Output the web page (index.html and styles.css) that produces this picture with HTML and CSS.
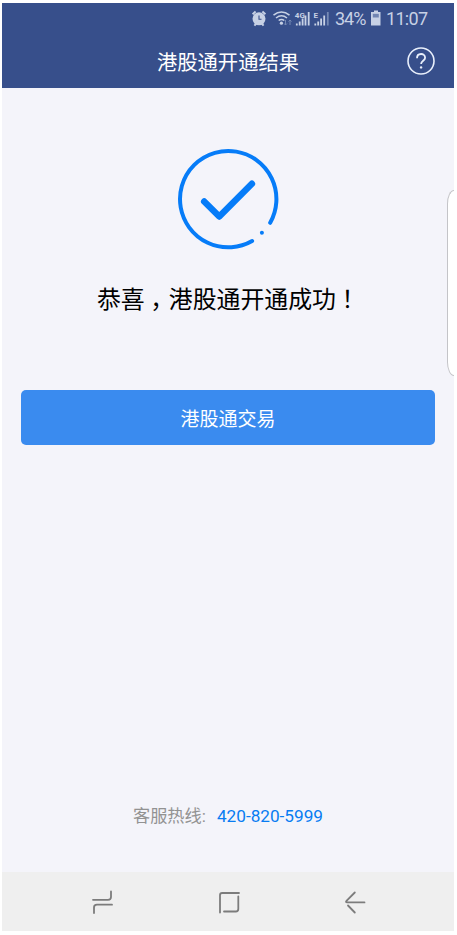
FILE: index.html
```html
<!DOCTYPE html>
<html lang="zh-CN">
<head>
<meta charset="utf-8">
<title>港股通开通结果</title>
<link rel="stylesheet" href="styles.css">
</head>
<body>
<div class="phone">
  <header class="header">
    <div class="status">
      <svg class="status-icons" width="80" height="20" viewBox="250 9 80 20" fill="none" stroke="#c7d1e5">
        <circle cx="259" cy="18.8" r="6.5" fill="#c7d1e5" stroke="none"/>
        <path d="M252.6 14.2l3-2.6M265.4 14.2l-3-2.6M254.4 25.6l1.6-1.8M263.6 25.6l-1.6-1.8" stroke-width="2"/>
        <path d="M259 15.5v3.7h2.5" stroke="#374f8b" stroke-width="1.1"/>
        <path d="M273.5 15.2q8-6.5 16 0M276 18q5.5-4.4 11 0M278.7 20.5q2.8-2.2 5.6 0" stroke-width="1.5"/>
        <circle cx="281.4" cy="23.2" r="1.6" fill="#c7d1e5" stroke="none"/>
        <path d="M285.5 20v5M284 23.5l1.5 1.5 1.5-1.5M290 25v-5M288.5 21.5l1.5-1.5 1.5 1.5" stroke="#7589b4"/>
        <path d="M296.8 25.5v-2M299.7 25.5v-4M302.6 25.5v-7M305.5 25.5v-10M308.7 25.5v-13.5" stroke-width="1.8"/>
        <path d="M315.3 25.5v-2M318.2 25.5v-4M321.1 25.5v-7M324.2 25.5v-10" stroke-width="1.8"/>
        <path d="M327.8 25.5v-13.5" stroke="#7589b4" stroke-width="1.8"/>
        <text class="net" x="294.8" y="17.5">4G</text>
        <text class="net" x="313.5" y="17.5">E</text>
      </svg>
      <span class="percent">34%</span>
      <svg class="battery" width="10" height="16" viewBox="0 0 10 16">
        <path d="M3 .5h4v1.5h2.5v13.5h-9.5v-13.5h3z" fill="#c7d1e5"/>
        <path d="M1.8 3.8h6v3.7h-6z" fill="#7185b2"/>
      </svg>
      <span class="clock">11:07</span>
    </div>
    <div class="titlebar">
      <h1 class="title">港股通开通结果</h1>
      <svg class="help" width="30" height="30" viewBox="0 0 30 30" fill="none" stroke="#e8effb" stroke-width="1.6">
        <circle cx="15" cy="15" r="13"/>
        <path d="M11 12.2c0-5.5 8.1-5.5 8.1-.5 0 3-4 3.1-4 6.3" stroke-width="1.8"/>
        <circle cx="15.1" cy="21.4" r="1.2" fill="#e8effb" stroke="none"/>
      </svg>
    </div>
  </header>
  <main class="main">
    <svg class="success" width="104" height="104" viewBox="0 0 104 104" fill="none" stroke="#067cf8" stroke-linecap="round" stroke-linejoin="round">
      <path d="M76.1 93A48.2 48.2 0 1 1 94.2 74.8" stroke-width="4"/>
      <path d="M28.2 53.5L43.3 68.5L75.9 35.7" stroke-width="6.5"/>
      <circle cx="85.9" cy="84.7" r="2" fill="#067cf8" stroke="none"/>
    </svg>
    <p class="message">恭喜<span class="mark">，</span>港股通开通成功<span class="mark">！</span></p>
    <button class="trade">港股通交易</button>
    <p class="hotline">客服热线:<span class="number">420-820-5999</span></p>
    <div class="edge"></div>
  </main>
  <nav class="nav">
    <svg width="24" height="26" viewBox="0 0 24 26">
      <path d="M2 10.8H17Q20 10.8 20 8V2.5M21 15.7H6Q3 15.7 3 18.5V24"/>
    </svg>
    <svg width="24" height="26" viewBox="0 0 24 26">
      <path d="M3 23.5V6.2Q3 4 5.2 4H22M21.3 7.5V20Q21.3 22.5 18.8 22.5H7"/>
    </svg>
    <svg width="24" height="26" viewBox="0 0 24 26">
      <path d="M21.5 13.4H4.2Q2.2 13.4 3.5 11.8L11.8 3.5M5 16.5L11.8 23.5"/>
    </svg>
  </nav>
</div>
</body>
</html>
```
FILE: styles.css
```css
* {
  box-sizing: border-box;
}

body {
  margin: 0;
  padding: 3px 3px 4px 2px;
  height: 935px;
  background: #fff;
  font-family: Roboto, "Noto Sans CJK SC", sans-serif;
  overflow: hidden;
}

h1,
p {
  margin: 0;
  font-weight: 400;
}

.phone {
  display: flex;
  flex-direction: column;
  height: 928px;
  background: #f4f4fa;
}

.header {
  height: 85px;
  background: #374f8b;
  color: #fff;
}

.status {
  display: flex;
  align-items: center;
  height: 32px;
  padding-left: 248px;
  color: #c7d1e5;
  font-size: 18px;
  line-height: 20px;
}

.status-icons {
  flex: none;
}

.net {
  font: 700 8px Roboto, sans-serif;
  fill: #c7d1e5;
  stroke: none;
}

.percent {
  width: 35px;
  padding-left: 5px;
  letter-spacing: -1px;
  white-space: nowrap;
}

.battery {
  margin: 0 5px 2px 6px;
}

.clock {
  letter-spacing: -0.7px;
}

.titlebar {
  display: grid;
  grid-template-columns: 52px 1fr 52px;
  align-items: center;
  height: 52px;
}

.title {
  grid-column: 2;
  padding-top: 3px;
  font-size: 20.3px;
  line-height: 30px;
  text-align: center;
}

.help {
  margin-left: 4px;
}

.main {
  position: relative;
  display: flex;
  flex: 1;
  flex-direction: column;
  align-items: center;
  padding: 59px 19px 42px;
}

.success {
  flex: none;
  margin-top: 1px;
}

.message {
  margin-top: 30px;
  padding-left: 1px;
  color: #000;
  font-size: 23.9px;
  line-height: 36px;
  white-space: nowrap;
}

.mark {
  display: inline-block;
  width: 24px;
  padding-right: 1px;
  font-feature-settings: "halt";
  text-align: center;
}

.trade {
  width: 414px;
  height: 55px;
  margin-top: 72px;
  padding: 0;
  border: 0;
  border-radius: 5px;
  background: #3a8bef;
  color: #fff;
  font: inherit;
  font-size: 19px;
}

.hotline {
  margin-top: auto;
  color: #929292;
  font-size: 17.2px;
  line-height: 28px;
}

.number {
  margin-left: 11px;
  color: #087cf2;
}

.edge {
  position: absolute;
  top: 102px;
  right: 0;
  width: 7px;
  height: 186px;
  border: 1px solid #c4c4c8;
  border-right: 0;
  border-radius: 7px 0 0 7px / 14px 0 0 14px;
  background: #fff;
}

.nav {
  display: flex;
  justify-content: center;
  gap: 102px;
  height: 59px;
  padding: 17px 0 0 1px;
  background: #efefef;
}

.nav svg {
  fill: none;
  stroke: #7c7c7c;
  stroke-width: 1.8;
  stroke-linecap: round;
}
```
